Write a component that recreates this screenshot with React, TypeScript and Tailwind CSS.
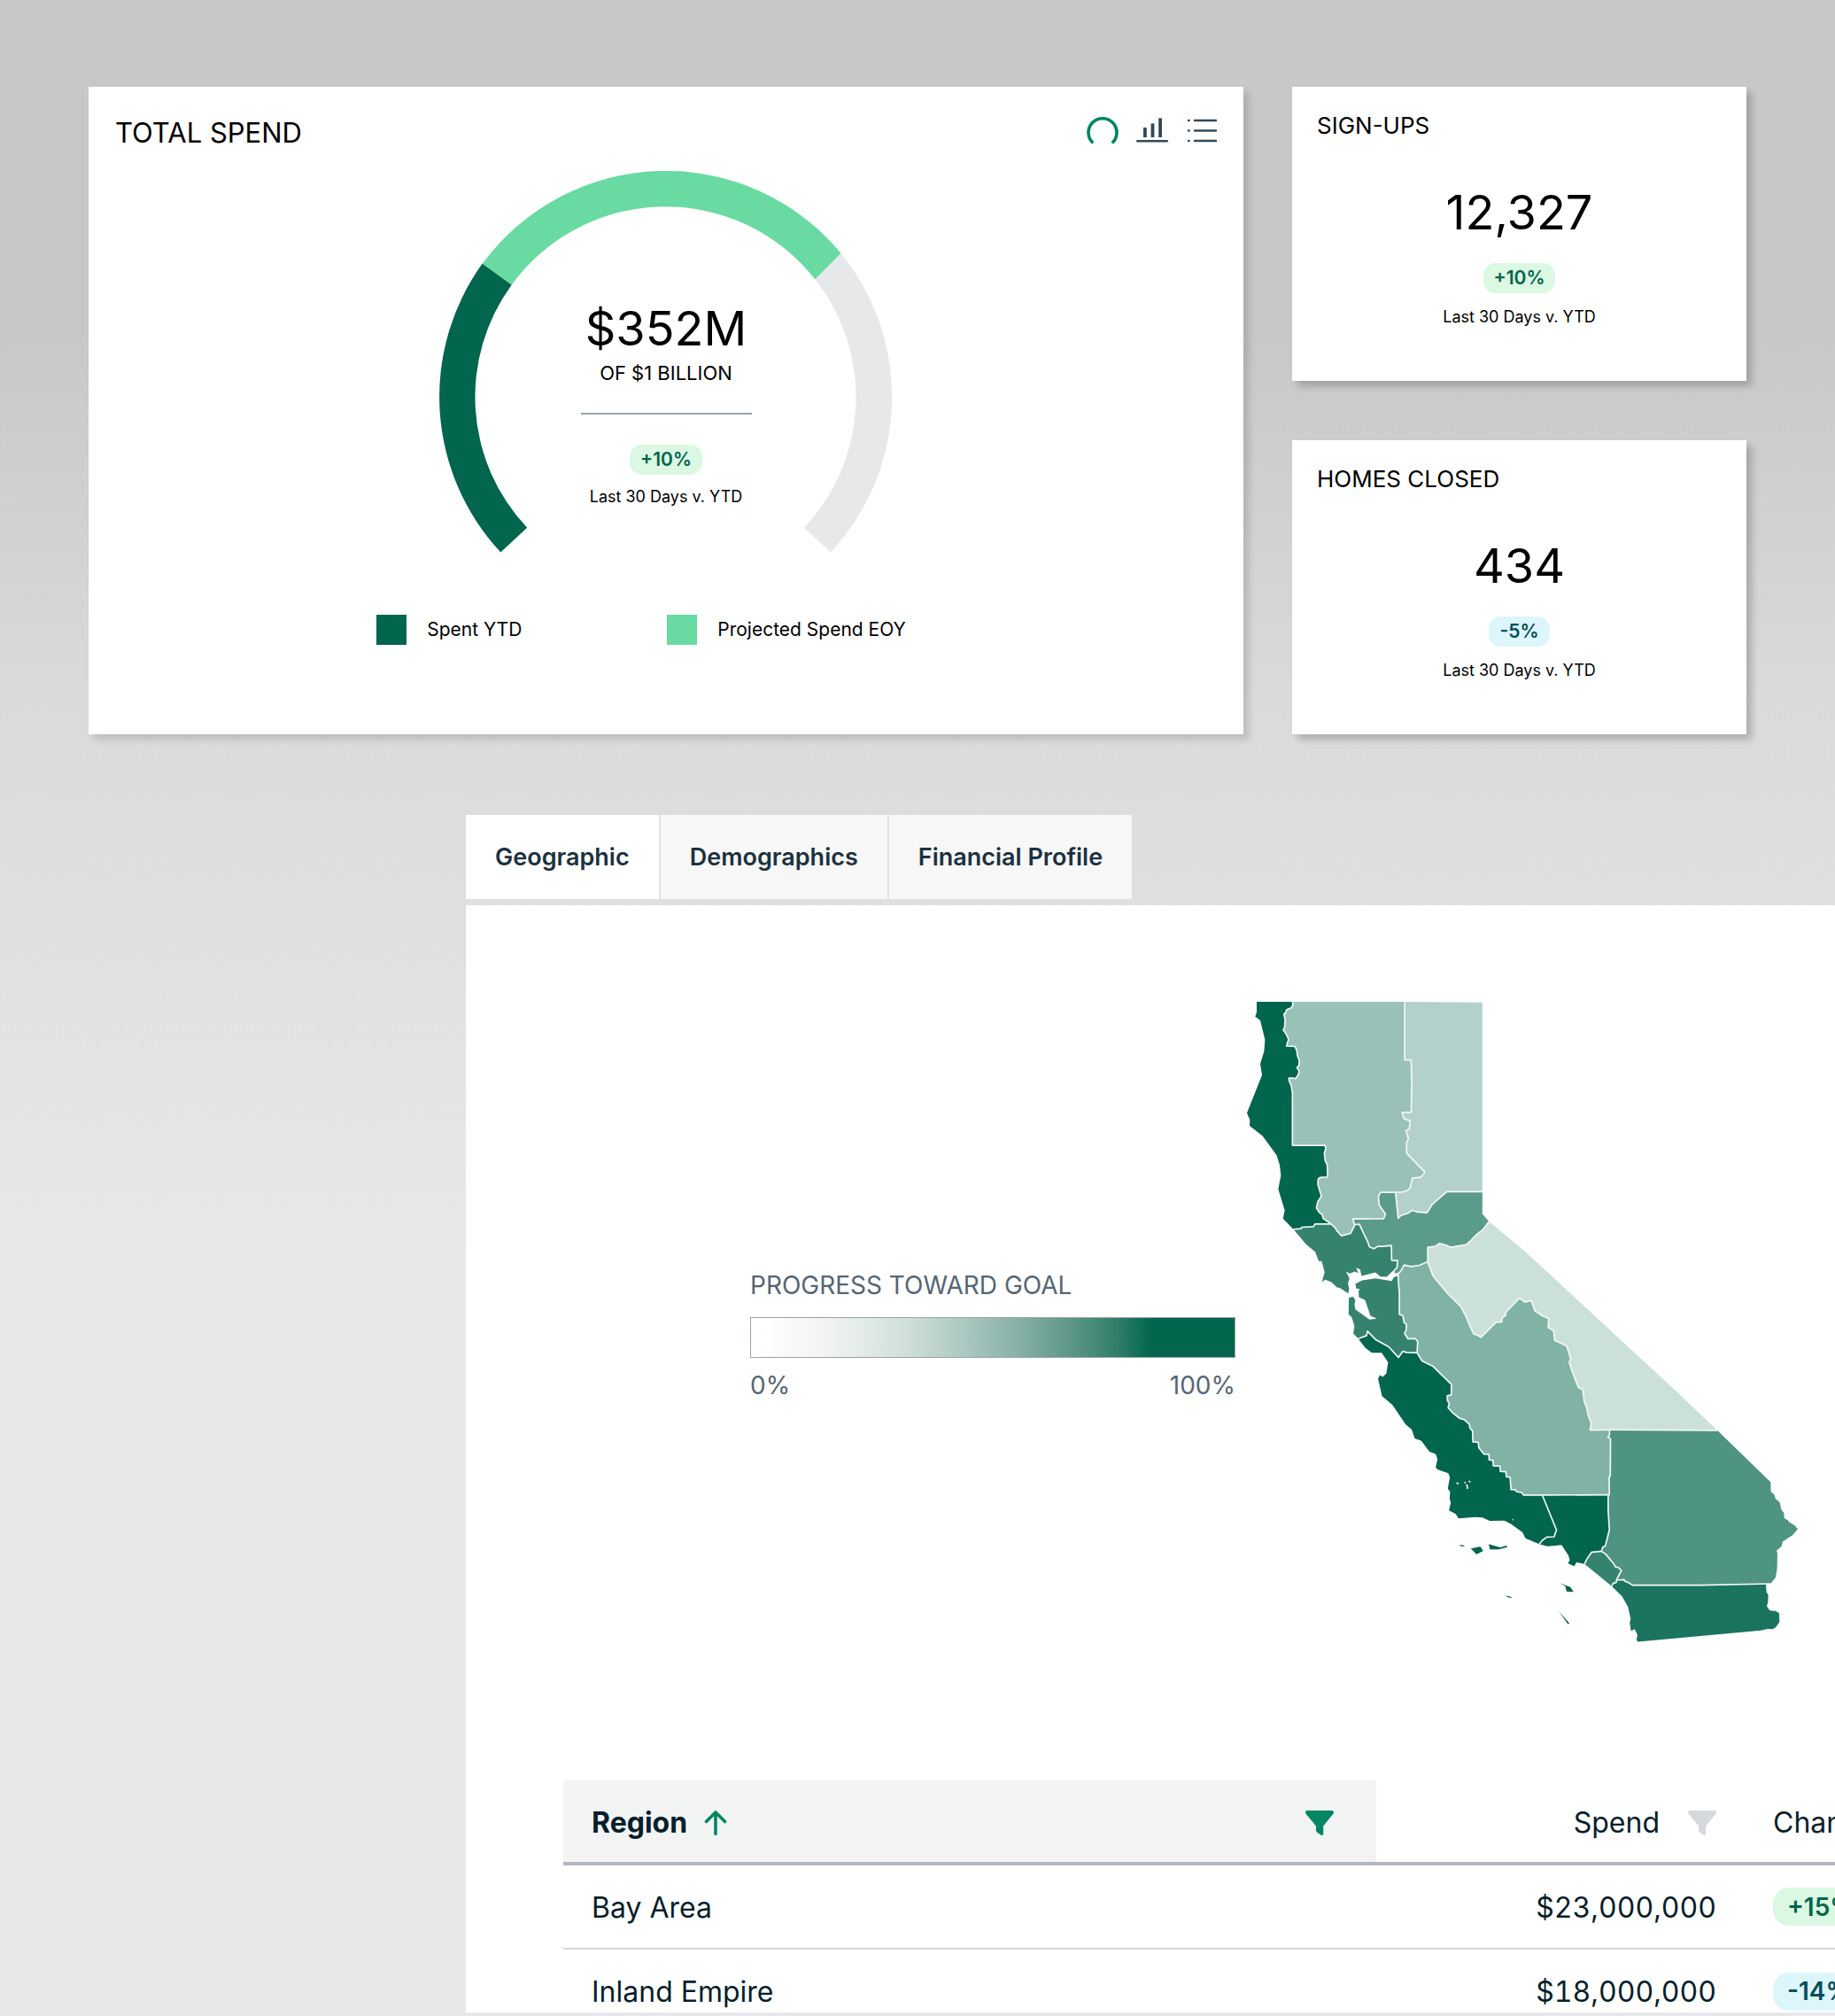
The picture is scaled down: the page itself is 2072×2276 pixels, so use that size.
import React from "react";

const flip = (points: string) => points.split(" ").reverse().join(" ");
const ring = (...parts: string[]) => parts.join(" ");

/* Outer edges of the state, north to south along the coast, then the eastern side */
const northCoast =
  "118,62 118,97 113,112 130,125 146,190 143,230 130,272 136,310 85,438 95,462 94,482 138,516 160,546 186,582 196,615 200,650 191,696 213,768 207,796 242,832";
const bayNorthShore =
  "242,832 285,883 316,908 328,940 338,940 348,977 339,1010 350,1003 370,1010 391,1030 398,1030 428,1049 431,1035 427,1015 432,998 420,974 432,982 450,975 462,980 455,962 468,968 473,990 520,978 537,992 558,993 580,972";
const bayEastShore =
  "597,990 583,994 575,1007 520,998 475,1005 452,1017 455,1032 467,1035 463,1042 464,1062 485,1072 503,1125 525,1135 500,1138 452,1103 449,1085 452,1072 444,1060 430,1064 429,1120 440,1130 449,1160 445,1185 462,1202";
const centralCoast =
  "462,1202 485,1233 508,1250 541,1250 563,1282 557,1320 545,1332 535,1326 529,1338 542,1396 578,1427 622,1492 643,1510 653,1540 675,1548 703,1585 724,1593 730,1610 724,1638 730,1645 767,1658 772,1672 765,1710 773,1722 771,1742 775,1758 769,1784 792,1796 801,1811 857,1806 882,1808 907,1819 957,1818 980,1830 1018,1858 1028,1878 1075,1898";
const laCoast =
  "1075,1898 1102,1905 1150,1901 1173,1935 1178,1952 1172,1963 1193,1973 1201,1959 1228,1965";
const southCoast =
  "1320,2040 1355,2075 1375,2110 1384,2150 1381,2165 1385,2192 1398,2186 1407,2205 1404,2222 1408,2228";
const southEast =
  "1408,2228 1825,2190 1848,2185 1865,2186 1875,2180 1888,2162 1887,2132 1875,2124 1855,2123 1845,2108 1849,2095 1850,2070 1844,2060 1842,2034";
const colorado =
  "1858,2032 1875,2010 1880,1980 1881,1930 1878,1920 1895,1905 1899,1889 1932,1868 1950,1847 1938,1833 1922,1824 1915,1816 1904,1810 1903,1792 1895,1782 1888,1755 1875,1745 1870,1730 1859,1720 1858,1688 1678,1513";
const nevada = "1678,1513 1538,1380 1305,1165 1117,990 1015,897 905,806";

/* Borders shared by two regions */
const coastValley =
  "240,62 240,75 234,83 220,88 215,100 210,104 214,120 213,145 208,158 214,165 222,180 226,190 222,200 219,212 248,213 254,228 256,245 262,260 261,278 254,284 262,298 258,310 250,322 240,320 227,320 228,330 235,345 239,370 239,548 349,548 352,558 347,575 350,600 357,615 358,655 332,657 326,662 325,680 331,700 337,720 325,738 320,760 330,775 340,783 343,795 370,814";
const coastBay = "242,832 268,830 270,825 310,823 316,814 370,814";
const valleyBay = "370,814 383,826 390,838 405,854 436,846 450,818";
const valleyCapital = "450,818 443,797 548,796 554,780 543,765 533,750 530,720 538,707 588,707";
const valleySierra =
  "619,62 619,258 641,260 643,330 641,436 610,436 617,458 637,465 635,492 623,498 632,525 625,540 626,575 687,638 683,646 673,656 645,659 638,690 630,700 612,706 588,707";
const sierraCapital =
  "588,707 597,795 605,786 630,778 644,768 664,774 695,776 712,748 735,728 762,705 882,705";
const bayCapital =
  "450,816 466,815 475,835 488,862 493,872 500,892 515,898 528,890 545,890 574,887 575,937 595,938 593,962 583,972 582,984 597,982";
const capitalJoaquin = "597,982 605,975 617,953 640,958 668,954 697,942";
const capitalInyo =
  "697,942 697,893 722,890 737,880 760,886 775,893 828,884 845,868 862,850 885,832 905,806";
const inyoJoaquin =
  "697,942 715,990 765,1050 810,1095 828,1130 838,1155 853,1187 865,1190 877,1198 928,1147 947,1146 950,1130 960,1125 962,1112 1008,1065 1025,1078 1048,1074 1060,1108 1085,1125 1107,1135 1105,1165 1123,1175 1127,1208 1168,1228 1181,1270 1176,1282 1187,1315 1200,1350 1208,1368 1222,1375 1227,1415 1235,1435 1240,1460 1251,1490 1246,1512";
const joaquinSouthEast = "1246,1512 1313,1511";
const inyoInland = "1313,1511 1678,1513";
const joaquinInland = "1313,1511 1312,1530 1307,1535 1316,1542 1315,1668 1311,1672 1312,1731";
const bayJoaquin =
  "597,982 598,1015 601,1045 601,1120 613,1124 617,1148 625,1154 624,1172 619,1185 630,1203 655,1202 663,1212 661,1250";
const bayCentral = "462,1202 490,1192 493,1177 520,1205 565,1230 598,1266 613,1245 625,1249 661,1250";
const centralJoaquin =
  "661,1250 678,1278 715,1296 777,1357 777,1392 763,1396 764,1412 770,1422 766,1436 780,1452 805,1472 820,1476 838,1492 840,1505 849,1515 850,1552 868,1553 870,1572 887,1593 904,1594 905,1613 918,1614 919,1633 942,1634 943,1652 962,1653 963,1670 976,1672 979,1713 994,1714 997,1720 1017,1724 1021,1732 1085,1732";
const laJoaquin = "1085,1732 1312,1731";
const centralLa = "1085,1732 1133,1850 1130,1858 1125,1873 1100,1874 1085,1885 1075,1898";
const laInland = "1308,1732 1308,1785 1312,1850 1298,1905 1290,1908 1285,1922";
const laOrange = "1285,1922 1252,1925 1243,1938 1235,1950 1228,1965";
const orangeInland =
  "1285,1922 1300,1932 1325,1962 1333,1975 1342,1977 1353,1987 1338,2015 1336,2020";
const orangeDiego = "1336,2020 1335,2028 1325,2030 1320,2040";
const diegoInland = "1336,2020 1362,2018 1364,2023 1380,2030 1390,2037 1620,2037 1858,2032";

const regions = [
  { name: "North Coast", fill: "#02654d", points: ring(northCoast, coastBay, flip(coastValley)) },
  {
    name: "Sacramento Valley",
    fill: "#9ac1b8",
    points: ring(coastValley, valleyBay, valleyCapital, flip(valleySierra)),
  },
  { name: "Northern Sierra", fill: "#b4d0ca", points: ring(valleySierra, sierraCapital, "882,64") },
  {
    name: "Capital Region",
    fill: "#5b9b8a",
    points: ring(valleyCapital, sierraCapital, "882,780 905,806", flip(capitalInyo), flip(capitalJoaquin), flip(bayCapital)),
  },
  {
    name: "North Bay",
    fill: "#35836f",
    points: ring(bayNorthShore, "582,984", flip(bayCapital), flip(valleyBay), flip(coastBay)),
  },
  {
    name: "South Bay",
    fill: "#35836f",
    points: ring(bayEastShore, bayCentral, flip(bayJoaquin)),
  },
  { name: "Eastern Sierra", fill: "#cce0da", points: ring(inyoJoaquin, inyoInland, nevada, flip(capitalInyo)) },
  {
    name: "San Joaquin Valley",
    fill: "#81b2a6",
    points: ring(capitalJoaquin, inyoJoaquin, joaquinInland, "1085,1732", flip(centralJoaquin), flip(bayJoaquin)),
  },
  { name: "Central Coast", fill: "#02654d", points: ring(centralCoast, flip(centralLa), flip(centralJoaquin), flip(bayCentral)) },
  { name: "Los Angeles", fill: "#02654d", points: ring(laCoast, flip(laOrange), flip(laInland), "1085,1732", centralLa) },
  { name: "Orange County", fill: "#35836f", points: ring(orangeInland, orangeDiego, flip(laOrange)) },
  {
    name: "Inland Empire",
    fill: "#4f9383",
    points: ring(joaquinInland, laInland, orangeInland, diegoInland, colorado),
  },
  { name: "San Diego", fill: "#1b7460", points: ring(southCoast, southEast, flip(diegoInland), orangeDiego) },
];

const borders = [
  coastValley, coastBay, valleyBay, valleyCapital, valleySierra, sierraCapital, bayCapital,
  capitalJoaquin, capitalInyo, inyoJoaquin, joaquinSouthEast, inyoInland, joaquinInland,
  bayJoaquin, bayCentral, centralJoaquin, laJoaquin, centralLa, laInland, laOrange,
  orangeInland, orangeDiego, diegoInland,
];

const islands = [
  "801,1902 816,1901 823,1906 812,1905",
  "843,1913 875,1906 885,1921 862,1932",
  "903,1898 943,1909 964,1902 966,1908 937,1916 908,1916",
  "963,2072 980,2077 982,2081 966,2077",
  "1144,2030 1180,2043 1191,2060 1167,2058 1163,2040",
  "1141,2126 1177,2166 1172,2169",
];

const lakes = ["794,1692 802,1692", "822,1688 825,1692", "828,1696 831,1701 831,1711", "836,1685 842,1687", "984,1815 987,1815"];

function CaliforniaMap() {
  return (
    <svg
      viewBox="85 62 1865 2166"
      className="w-[622px] shrink-0 overflow-visible"
      role="img"
      aria-label="Progress toward goal by California region"
    >
      {regions.map((r) => (
        <polygon key={r.name} points={r.points} fill={r.fill} />
      ))}
      {islands.map((p) => (
        <polygon key={p} points={p} fill="#02654d" />
      ))}
      <g fill="none" stroke="#f4f8f7" strokeWidth="5" strokeLinejoin="round">
        {borders.map((p) => (
          <polyline key={p} points={p} />
        ))}
        {lakes.map((p) => (
          <polyline key={p} points={p} />
        ))}
      </g>
    </svg>
  );
}

function Gauge() {
  return (
    <svg viewBox="0 0 514 432" className="w-[514px] [grid-area:1/1]" aria-hidden="true">
      <path d="M70.3 431.4A257 257 0 0 1 49.7 105.6L82.8 129.4A215 215 0 0 0 100.2 403.8Z" fill="#02654d" />
      <path d="M49.7 105.6A257 257 0 0 1 454.7 94L425.5 123.5A215 215 0 0 0 82.8 129.4Z" fill="#69daa2" />
      <path d="M454.7 94A257 257 0 0 1 443 431.4L413 403.8A215 215 0 0 0 425.5 123.5Z" fill="#e6e8ea" />
    </svg>
  );
}

function Funnel({ className }: { className: string }) {
  return (
    <svg viewBox="0 0 32 28" className={className} aria-hidden="true">
      <path
        d="M2.2 0H29.8C31.8 0 32.6 2.2 31.4 3.7L20.2 17.4V26.2C20.2 27.8 18.6 28.6 17.3 27.6L13 24.6C12.3 24.1 12 23.5 12 22.7V17.4L.6 3.7C-.6 2.2 .2 0 2.2 0Z"
        fill="currentColor"
      />
    </svg>
  );
}

type Tone = "up" | "down";

function Badge({ tone, large, children }: { tone: Tone; large?: boolean; children: React.ReactNode }) {
  const color = tone === "up" ? "bg-[#dbf8e2] text-[#02654d]" : "bg-[#dcf6fb] text-[#044e5c]";
  const size = large ? "h-[43px] rounded-[18px] px-4 text-[28px]" : "h-[34px] rounded-[14px] px-3 text-[21px]";
  return <span className={`inline-flex items-center font-semibold ${color} ${size}`}>{children}</span>;
}

function StatCard({ title, value, tone, change }: { title: string; value: string; tone: Tone; change: string }) {
  return (
    <section className="flex h-[332px] flex-col bg-white px-7 pt-6 shadow-[6px_6px_8px_rgba(0,0,0,0.2)]">
      <h2 className="text-[26px] leading-10">{title}</h2>
      <div className="mt-11 flex flex-col items-center">
        <p className="text-[54px] leading-[68px]">{value}</p>
        <div className="mt-[23px] flex">
          <Badge tone={tone}>{change}</Badge>
        </div>
        <p className="mt-[13px] text-[18px] leading-7">Last 30 Days v. YTD</p>
      </div>
    </section>
  );
}

const tabs = ["Geographic", "Demographics", "Financial Profile"];

const rows: { region: string; spend: string; tone: Tone; change: string }[] = [
  { region: "Bay Area", spend: "$23,000,000", tone: "up", change: "+15%" },
  { region: "Inland Empire", spend: "$18,000,000", tone: "down", change: "-14%" },
];

export default function App() {
  return (
    <main className="min-h-screen overflow-hidden bg-[linear-gradient(#c8c8c8_0px,#c8c8c8_380px,#cfd0d0_560px,#d8dadc_780px,#e6e8ea_1420px)] font-['Inter',sans-serif] text-black">
      <div className="grid grid-cols-[1304fr_513fr] gap-x-[55px] px-[100px] pt-[98px]">
        <section className="flex flex-col bg-white shadow-[6px_6px_8px_rgba(0,0,0,0.14)]">
          <div className="flex items-start justify-between pl-[30px] pr-7 pt-8">
            <h1 className="text-[31px] leading-10">TOTAL SPEND</h1>
            <div className="flex items-center gap-[18px]">
              <button type="button" aria-label="Gauge view" aria-pressed="true" className="text-[#048662]">
                <svg viewBox="0 0 38 36" className="h-9 w-[38px]" fill="none" stroke="currentColor" strokeWidth="3.6" aria-hidden="true">
                  <path d="M8.2 31.5A16 16 0 1 1 29.8 31.5" />
                </svg>
              </button>
              <button type="button" aria-label="Bar view" className="text-[#34495a]">
                <svg viewBox="0 0 38 36" className="h-9 w-[38px]" fill="currentColor" aria-hidden="true">
                  <rect x="1" y="28" width="36" height="2.4" rx="1.2" />
                  <rect x="9" y="14" width="3.8" height="11" />
                  <rect x="17.6" y="9.4" width="3.8" height="15.6" />
                  <rect x="26.2" y="3.4" width="3.8" height="21.6" />
                </svg>
              </button>
              <button type="button" aria-label="List view" className="text-[#34495a]">
                <svg viewBox="0 0 38 36" className="h-9 w-[38px]" fill="none" stroke="currentColor" strokeWidth="2.4" strokeLinecap="round" aria-hidden="true">
                  <path d="M11 6H35M11 17.5H35M11 29H35M4 6H4.6M4 17.5H4.6M4 29H4.6" />
                </svg>
              </button>
            </div>
          </div>
          <div className="mt-[22px] grid justify-items-center">
            <Gauge />
            <div className="flex flex-col items-center pt-[145px] [grid-area:1/1]">
              <p className="text-[54px] leading-[68px]">$352M</p>
              <p className="text-[22px] leading-8">OF $1 BILLION</p>
              <hr className="mt-[29px] w-[193px] border-t-2 border-[#9aa3ab]" />
              <div className="mt-[34px] flex">
                <Badge tone="up">+10%</Badge>
              </div>
              <p className="mt-[11px] text-[18px] leading-7">Last 30 Days v. YTD</p>
            </div>
          </div>
          <ul className="mt-[70px] flex justify-center gap-[164px] pr-14 text-[21px] leading-[34px]">
            <li className="flex items-center gap-[23px]">
              <span className="size-[34px] bg-[#02654d]" />
              Spent YTD
            </li>
            <li className="flex items-center gap-[23px]">
              <span className="size-[34px] bg-[#69daa2]" />
              Projected Spend EOY
            </li>
          </ul>
        </section>
        <div className="flex flex-col gap-[67px]">
          <StatCard title="SIGN-UPS" value="12,327" tone="up" change="+10%" />
          <StatCard title="HOMES CLOSED" value="434" tone="down" change="-5%" />
        </div>
      </div>

      <div className="ml-[526px] mt-[91px]">
        <div role="tablist" className="flex h-[95px]">
          {tabs.map((tab, i) => (
            <button
              key={tab}
              type="button"
              role="tab"
              aria-selected={i === 0}
              className="border-r-2 border-[#dfe1e3] bg-[#f7f7f7] px-[33px] pt-0.5 text-[27px] font-semibold text-[#1c3140] last:border-r-0 aria-selected:bg-white"
            >
              {tab}
            </button>
          ))}
        </div>
        <div className="mt-[7px] overflow-hidden bg-white pt-[109px]">
          <div className="flex items-center gap-[13px] pl-[321px]">
            <div className="w-[548px] shrink-0 pt-[30px] text-[28px] leading-8 text-[#566573]">
              <p id="goal">PROGRESS TOWARD GOAL</p>
              <div
                role="img"
                aria-labelledby="goal"
                className="mb-[15px] mt-5 h-[46px] border border-[#9aa3ab] bg-[linear-gradient(90deg,#fff_2%,#f1f4f3_16%,#d0dfdb_32%,#b5cec8_41%,#8bb4aa_54%,#5a9484_67%,#2e7e69_76%,#02654d_83%)]"
              />
              <div className="flex justify-between">
                <span>0%</span>
                <span>100%</span>
              </div>
            </div>
            <CaliforniaMap />
          </div>
          <div className="ml-[110px] mt-[157px] max-h-[262px] overflow-hidden">
            <table className="w-[1700px] table-fixed border-collapse text-[32px] leading-10 text-[#071e2b]">
              <colgroup>
                <col className="w-[918px]" />
                <col className="w-[416px]" />
                <col />
              </colgroup>
              <thead>
                <tr className="h-[94px] border-b-4 border-[#b3b9bd]">
                  <th scope="col" className="bg-[#f2f4f4] pl-8 pr-12 pt-1 text-left font-bold">
                    <div className="flex items-center">
                      <button type="button" className="flex items-center gap-[19px]">
                        Region
                        <svg viewBox="0 0 26 30" className="h-[30px] w-[26px]" fill="none" stroke="#048662" strokeWidth="3.6" strokeLinecap="round" strokeLinejoin="round" aria-hidden="true">
                          <path d="M13 27.5V3M2.5 13.5L13 3L23.5 13.5" />
                        </svg>
                      </button>
                      <button type="button" aria-label="Filter regions" className="ml-auto">
                        <Funnel className="h-7 w-8 text-[#048662]" />
                      </button>
                    </div>
                  </th>
                  <th scope="col" className="pr-8 pt-1 font-normal">
                    <div className="flex items-center justify-end gap-8">
                      Spend
                      <button type="button" aria-label="Filter spend">
                        <Funnel className="h-7 w-8 text-[#d5d9dc]" />
                      </button>
                    </div>
                  </th>
                  <th scope="col" className="pl-8 pt-1 text-left font-normal">
                    Change
                  </th>
                </tr>
              </thead>
              <tbody>
                {rows.map((row) => (
                  <tr key={row.region} className="h-24 border-b-2 border-[#d3d8db]">
                    <td className="pl-8 pt-0.5">{row.region}</td>
                    <td className="pr-8 pt-0.5 text-right tabular-nums">{row.spend}</td>
                    <td className="pl-8">
                      <div className="flex">
                        <Badge tone={row.tone} large>
                          {row.change}
                        </Badge>
                      </div>
                    </td>
                  </tr>
                ))}
              </tbody>
            </table>
          </div>
        </div>
      </div>
    </main>
  );
}
